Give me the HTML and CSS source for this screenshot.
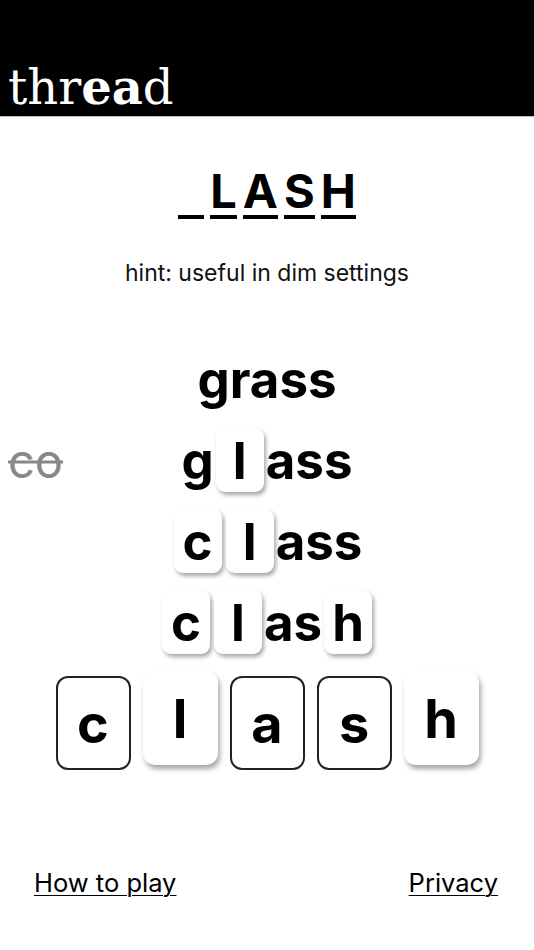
FILE: index.html
```html
<!DOCTYPE html>
<html lang="en">
<head>
<meta charset="utf-8">
<title>thread</title>
<link rel="stylesheet" href="styles.css">
</head>
<body>
<header class="header">
  <div class="logo">thr<b class="logo-bold">ea</b>d</div>
</header>
<main class="main">
  <div class="answer">
    <span class="slot slot-blank">&nbsp;</span>
    <span class="slot">L</span>
    <span class="slot">A</span>
    <span class="slot">S</span>
    <span class="slot">H</span>
  </div>
  <p class="hint">hint: useful in dim settings</p>
  <div class="ladder">
    <div class="row">grass</div>
    <div class="row">
      <span class="wrong">co</span>
      g<span class="tile">l</span>ass
    </div>
    <div class="row"><span class="tile">c</span><span class="tile">l</span>ass</div>
    <div class="row"><span class="tile">c</span><span class="tile">l</span>as<span class="tile">h</span></div>
  </div>
  <div class="final">
    <span class="cell cell-open">c</span>
    <span class="cell cell-up">l</span>
    <span class="cell cell-open">a</span>
    <span class="cell cell-open">s</span>
    <span class="cell cell-up">h</span>
  </div>
</main>
<footer class="footer">
  <a class="link" href="#">How to play</a>
  <a class="link" href="#">Privacy</a>
</footer>
</body>
</html>
```
FILE: styles.css
```css
* { box-sizing: border-box; }
body {
  margin: 0;
  font-family: Inter, "Liberation Sans", sans-serif;
  color: #000;
  background: #fff;
}
.header {
  height: 117px;
  background: #000;
  border-bottom: 1px solid #bdbdbd;
  display: flex;
  align-items: flex-end;
  padding: 0 0 5px 8px;
}
.logo {
  font-family: "DejaVu Serif", "Liberation Serif", serif;
  font-size: 48px;
  line-height: 1;
  color: #fff;
  font-weight: normal;
}
.logo-bold { font-weight: bold; }

.main { display: flex; flex-direction: column; align-items: center; }

.answer {
  margin-top: 50px;
  display: flex;
  justify-content: center;
  gap: 6px;
}
.slot {
  display: inline-block;
  font-size: 47px;
  font-weight: 700;
  line-height: 48px;
  border-bottom: 4px solid #000;
  text-align: center;
}
.slot-blank { width: 26px; }

.hint {
  margin: 40px 0 0;
  font-size: 23px;
  line-height: 28px;
  color: #111;
}

.ladder {
  margin-top: 60px;
  display: flex;
  flex-direction: column;
  gap: 17px;
  width: 100%;
  position: relative;
}
.row {
  height: 64px;
  display: flex;
  justify-content: center;
  align-items: center;
  font-size: 51px;
  font-weight: 700;
  line-height: 1;
  position: relative;
}
.tile {
  width: 48px;
  height: 64px;
  margin: 0 2px;
  background: #fff;
  border-radius: 9px;
  box-shadow: 2px 3px 4px rgba(0,0,0,0.35);
  display: flex;
  align-items: center;
  justify-content: center;
}
.wrong {
  position: absolute;
  left: 8px;
  top: 50%;
  transform: translateY(-50%);
  font-size: 47px;
  font-weight: 400;
  color: #888;
  text-decoration: line-through;
  text-decoration-thickness: 3px;
}

.final {
  margin-top: 22px;
  display: flex;
  gap: 12px;
  align-items: flex-end;
}
.cell {
  width: 75px;
  height: 94px;
  border-radius: 12px;
  background: #fff;
  display: flex;
  align-items: center;
  justify-content: center;
  font-size: 54px;
  font-weight: 700;
}
.cell-open { border: 2px solid #222; }
.cell-up {
  transform: translateY(-5px);
  box-shadow: 2px 4px 5px rgba(0,0,0,0.35);
}

.footer {
  margin-top: 97px;
  display: flex;
  justify-content: space-between;
  padding: 0 36px 0 34px;
}
.link {
  font-size: 25.5px;
  line-height: 31px;
  color: #000;
  text-decoration: underline;
  text-underline-offset: 3px;
  text-decoration-thickness: 1px;
}
```
